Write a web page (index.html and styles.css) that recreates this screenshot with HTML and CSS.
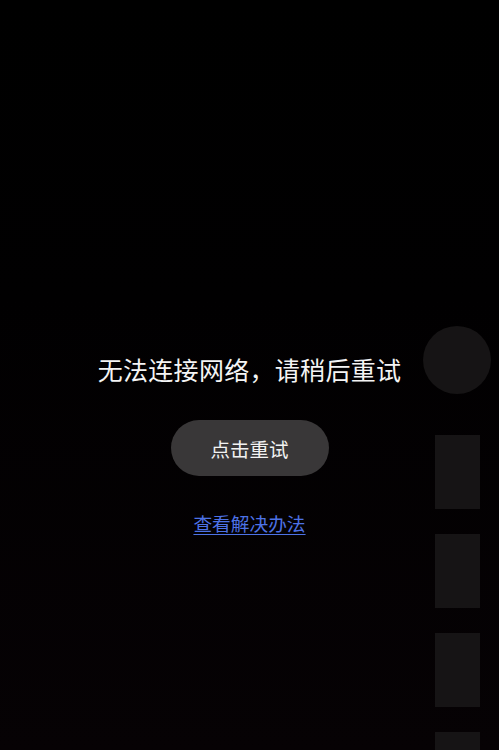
FILE: index.html
```html
<!DOCTYPE html>
<html lang="zh-CN">
<head>
<meta charset="utf-8">
<title>无法连接网络</title>
<link rel="stylesheet" href="styles.css">
</head>
<body>
<main class="page">
  <section class="error">
    <p class="error-title">无法连接网络，请稍后重试</p>
    <button class="retry-btn" type="button">点击重试</button>
    <a class="help-link" href="#">查看解决办法</a>
  </section>
  <aside class="side-rail">
    <div class="rail-avatar"></div>
    <div class="rail-item"></div>
    <div class="rail-item"></div>
    <div class="rail-item"></div>
    <div class="rail-item"></div>
  </aside>
</main>
</body>
</html>
```
FILE: styles.css
```css
* { box-sizing: border-box; }
html, body {
  margin: 0;
  padding: 0;
  height: 100%;
}
body {
  background: linear-gradient(180deg, #000000 0%, #010001 40%, #060204 100%);
  font-family: "Noto Sans CJK SC", "Noto Sans", sans-serif;
  overflow: hidden;
}
.page {
  position: relative;
  width: 499px;
  height: 750px;
  overflow: hidden;
}
.error {
  display: flex;
  flex-direction: column;
  align-items: center;
  padding-top: 355px;
}
.error-title {
  margin: 0;
  color: #f4f4f4;
  font-size: 25px;
  line-height: 28px;
  letter-spacing: 0.3px;
}
.retry-btn {
  margin-top: 37px;
  width: 158px;
  height: 56px;
  border: none;
  border-radius: 28px;
  background: #393738;
  color: #f2f2f2;
  font-family: inherit;
  font-size: 19.5px;
  padding: 0;
}
.help-link {
  margin-top: 36px;
  color: #4d72e6;
  font-size: 18.7px;
  line-height: 22px;
  text-decoration: underline;
  text-underline-offset: 3px;
}
.side-rail {
  position: absolute;
  top: 326px;
  right: 8px;
  width: 68px;
  display: flex;
  flex-direction: column;
  align-items: center;
}
.rail-avatar {
  width: 68px;
  height: 68px;
  border-radius: 50%;
  background: #161415;
  margin-bottom: 41px;
}
.rail-item {
  flex: none;
  width: 45px;
  height: 74px;
  background: #161415;
  margin-bottom: 25px;
}
```
